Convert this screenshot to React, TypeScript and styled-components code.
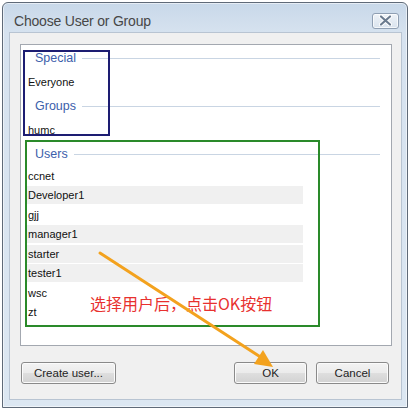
import React from "react";
import styled, { createGlobalStyle } from "styled-components";

const GlobalStyle = createGlobalStyle`
  html, body { margin: 0; padding: 0; background: #ffffff; }
  body { font-family: "Liberation Sans", Arial, sans-serif; }
  * { box-sizing: border-box; }
`;

const Page = styled.div`
  position: relative;
  width: 412px;
  height: 410px;
  padding: 2px 0 0 2px;
`;

const Window = styled.div`
  width: 406px;
  height: 406px;
  display: flex;
  flex-direction: column;
  border: 1px solid #5f6a78;
  border-radius: 6px 6px 0 0;
  background: linear-gradient(#c8d8e9 0px, #d6e2ef 30px, #dce7f2 100%);
  box-shadow: inset 0 0 0 1px rgba(255, 255, 255, 0.55);
`;

const TitleBar = styled.div`
  height: 29px;
  display: flex;
  align-items: center;
  padding: 0 8px 0 11px;
`;

const Title = styled.span`
  font-family: "Liberation Sans", Arial, sans-serif;
  font-size: 14px;
  letter-spacing: -0.2px;
  color: #474747;
  padding-top: 6px;
`;

const CloseButton = styled.div`
  margin-left: auto;
  margin-top: 6px;
  width: 27px;
  height: 16px;
  border: 1px solid #8f9fb3;
  border-radius: 3px;
  background: linear-gradient(#eef3f8, #d9e3ee);
  box-shadow: inset 0 0 0 1px rgba(255, 255, 255, 0.7);
  display: flex;
  align-items: center;
  justify-content: center;
`;

const Client = styled.div`
  flex: 1;
  margin: 0 5px 7px 6px;
  border: 1px solid #b8c4d2;
  background: #f0f0f0;
  display: flex;
  flex-direction: column;
  padding: 11px 9px 0 10px;
`;

const ListBox = styled.div`
  height: 302px;
  border: 1px solid #a3a8b0;
  background: #ffffff;
  padding-top: 1px;
`;

const GroupHeader = styled.div`
  height: 24px;
  display: flex;
  align-items: center;
  padding: 0 11px 0 14px;
  font-size: 12.5px;
  color: #3c60ab;
  &::after {
    content: "";
    flex: 1;
    height: 1px;
    margin-left: 6px;
    background: #c9d5e3;
  }
`;

const Row = styled.div<{ $tall?: boolean }>`
  height: ${(p) => (p.$tall ? "24px" : "19.5px")};
  padding: ${(p) => (p.$tall ? "0" : "0.5px 0 1px")};
  display: flex;
`;

const RowBand = styled.div<{ $shaded?: boolean }>`
  width: 277px;
  margin-left: 5px;
  padding-left: 2px;
  display: flex;
  align-items: center;
  font-size: 11px;
  color: #111111;
  background: ${(p) => (p.$shaded ? "#f0f0f0" : "transparent")};
`;

const ButtonRow = styled.div`
  margin-top: 16px;
  display: flex;
  gap: 9px;
  padding: 0 3px 0 1px;
`;

const Button = styled.div<{ $width: number }>`
  width: ${(p) => p.$width}px;
  height: 22px;
  border: 1px solid #8a8a8a;
  border-radius: 3px;
  background: linear-gradient(#f3f3f3 0%, #ebebeb 50%, #dedede 52%, #d2d2d2 100%);
  box-shadow: inset 0 0 0 1px #fbfbfb;
  display: flex;
  align-items: center;
  justify-content: center;
  font-size: 11.5px;
  color: #1e1e1e;
  &:first-child {
    margin-right: auto;
  }
`;

const Marker = styled.div<{ $color: string }>`
  position: absolute;
  border: 2px solid ${(p) => p.$color};
`;

const Note = styled.div`
  position: absolute;
  left: 90px;
  top: 293px;
  font-family: "Noto Sans CJK SC", sans-serif;
  font-size: 16px;
  line-height: 20px;
  color: #e8312f;
  white-space: nowrap;
`;

const ArrowLayer = styled.svg`
  position: absolute;
  left: 0;
  top: 0;
  pointer-events: none;
`;

const CloseGlyph = () => (
  <svg width="13" height="11" viewBox="0 0 13 11">
    <path d="M2 1.5 L11 9.5 M11 1.5 L2 9.5" stroke="#ffffff" strokeWidth="4" strokeLinecap="round" />
    <path d="M2 1.5 L11 9.5 M11 1.5 L2 9.5" stroke="#6b7b8f" strokeWidth="2.2" strokeLinecap="round" />
  </svg>
);

type Entry = { name: string; shaded?: boolean };

const sections: { title: string; tall: boolean; items: Entry[] }[] = [
  { title: "Special", tall: true, items: [{ name: "Everyone" }] },
  { title: "Groups", tall: true, items: [{ name: "humc" }] },
  {
    title: "Users",
    tall: false,
    items: [
      { name: "ccnet" },
      { name: "Developer1", shaded: true },
      { name: "gjj" },
      { name: "manager1", shaded: true },
      { name: "starter", shaded: true },
      { name: "tester1", shaded: true },
      { name: "wsc" },
      { name: "zt" },
    ],
  },
];

export default function App() {
  return (
    <Page>
      <GlobalStyle />
      <Window>
        <TitleBar>
          <Title>Choose User or Group</Title>
          <CloseButton>
            <CloseGlyph />
          </CloseButton>
        </TitleBar>
        <Client>
          <ListBox>
            {sections.map((s) => (
              <React.Fragment key={s.title}>
                <GroupHeader>{s.title}</GroupHeader>
                {s.items.map((it) => (
                  <Row key={it.name} $tall={s.tall}>
                    <RowBand $shaded={it.shaded}>{it.name}</RowBand>
                  </Row>
                ))}
              </React.Fragment>
            ))}
          </ListBox>
          <ButtonRow>
            <Button $width={95}>Create user...</Button>
            <Button $width={73}>OK</Button>
            <Button $width={73}>Cancel</Button>
          </ButtonRow>
        </Client>
      </Window>

      <Marker $color="#1d1d72" style={{ left: 23, top: 50, width: 87, height: 86 }} />
      <Marker $color="#2a8a2a" style={{ left: 25, top: 140, width: 295, height: 187 }} />
      <Note>选择用户后，点击OK按钮</Note>
      <ArrowLayer width="412" height="410" viewBox="0 0 412 410">
        <line x1="100" y1="253" x2="262" y2="358" stroke="#f3a21e" strokeWidth="3" strokeLinecap="round" />
        <polygon points="273,367 254,364 263,350" fill="#f3a21e" />
      </ArrowLayer>
    </Page>
  );
}
